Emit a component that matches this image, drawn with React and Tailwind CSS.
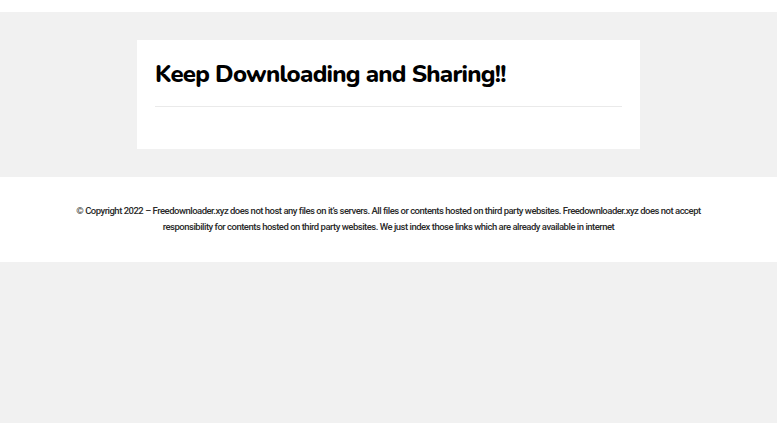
import React from 'react';

const App = () => {
    return (
        <div className="min-h-[423px] w-full bg-[#f1f1f1] flex flex-col">
            {/* Top bar */}
            <header className="h-[12px] bg-white"></header>

            {/* Main content */}
            <main className="flex justify-center pt-[28px] pb-[28px]">
                <article className="w-[503px] bg-white px-[18px] pt-[18px] pb-[42px]">
                    <h1 className="text-[24px] leading-[32px] font-extrabold text-black tracking-[-0.75px] pb-[16px] border-b border-[#eaeaea]" style={{ fontFamily: 'Nunito, Lato, "Open Sans", sans-serif' }}>
                        Keep Downloading and Sharing!!
                    </h1>
                </article>
            </main>

            {/* Footer */}
            <footer className="bg-white h-[85px] flex items-center justify-center">
                <p className="max-w-[650px] text-center text-[9.5px] leading-[16px] font-medium tracking-[-0.5px] text-[#2a2a2a] -mt-[2px]" style={{ fontFamily: 'Roboto, "Liberation Sans", sans-serif' }}>
                    © Copyright 2022 – Freedownloader.xyz does not host any files on it’s servers. All files or contents hosted on third party websites. Freedownloader.xyz does not accept responsibility for contents hosted on third party websites. We just index those links which are already available in internet
                </p>
            </footer>

            <div className="flex-1"></div>
        </div>
    );
};

export default App;
